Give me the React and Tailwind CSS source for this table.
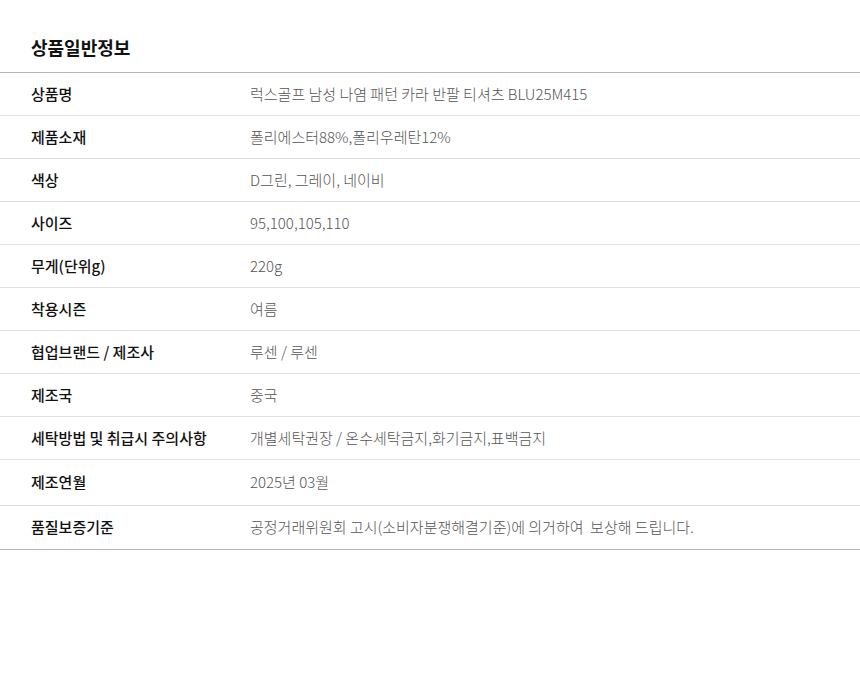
import React from 'react';

const rows = [
  ['상품명', '럭스골프 남성 나염 패턴 카라 반팔 티셔츠 BLU25M415'],
  ['제품소재', '폴리에스터88%,폴리우레탄12%'],
  ['색상', 'D그린, 그레이, 네이비'],
  ['사이즈', '95,100,105,110'],
  ['무게(단위g)', '220g'],
  ['착용시즌', '여름'],
  ['협업브랜드 / 제조사', '루센 / 루센'],
  ['제조국', '중국'],
  ['세탁방법 및 취급시 주의사항', '개별세탁권장 / 온수세탁금지,화기금지,표백금지'],
  ['제조연월', '2025년 03월', 'tall'],
  ['품질보증기준', '공정거래위원회 고시(소비자분쟁해결기준)에 의거하여  보상해 드립니다.'],
];

export default function App() {
  return (
    <div className="min-h-[700px] bg-white font-['Noto_Sans_CJK_KR','Noto_Sans',sans-serif]">
      {/* Title */}
      <h2 className="px-[31px] pt-[35px] pb-[13px] text-[18px] leading-[24px] font-bold text-[#111]">
        상품일반정보
      </h2>

      {/* Info table */}
      <div className="border-t border-b border-t-[#b4b4b4] border-b-[#b4b4b4]">
        {rows.map(([label, value, tall], i) => (
          <div
            key={i}
            className={
              (tall ? 'h-[46px] ' : 'h-[43px] ') +
              (i < rows.length - 1 ? 'border-b border-[#e2e2e2] ' : '') +
              'flex items-center text-[15px]'
            }
          >
            <div className="w-[250px] shrink-0 pl-[31px] font-medium text-[#111]">{label}</div>
            <div className="font-light text-[#555] whitespace-pre">{value}</div>
          </div>
        ))}
      </div>
    </div>
  );
}
